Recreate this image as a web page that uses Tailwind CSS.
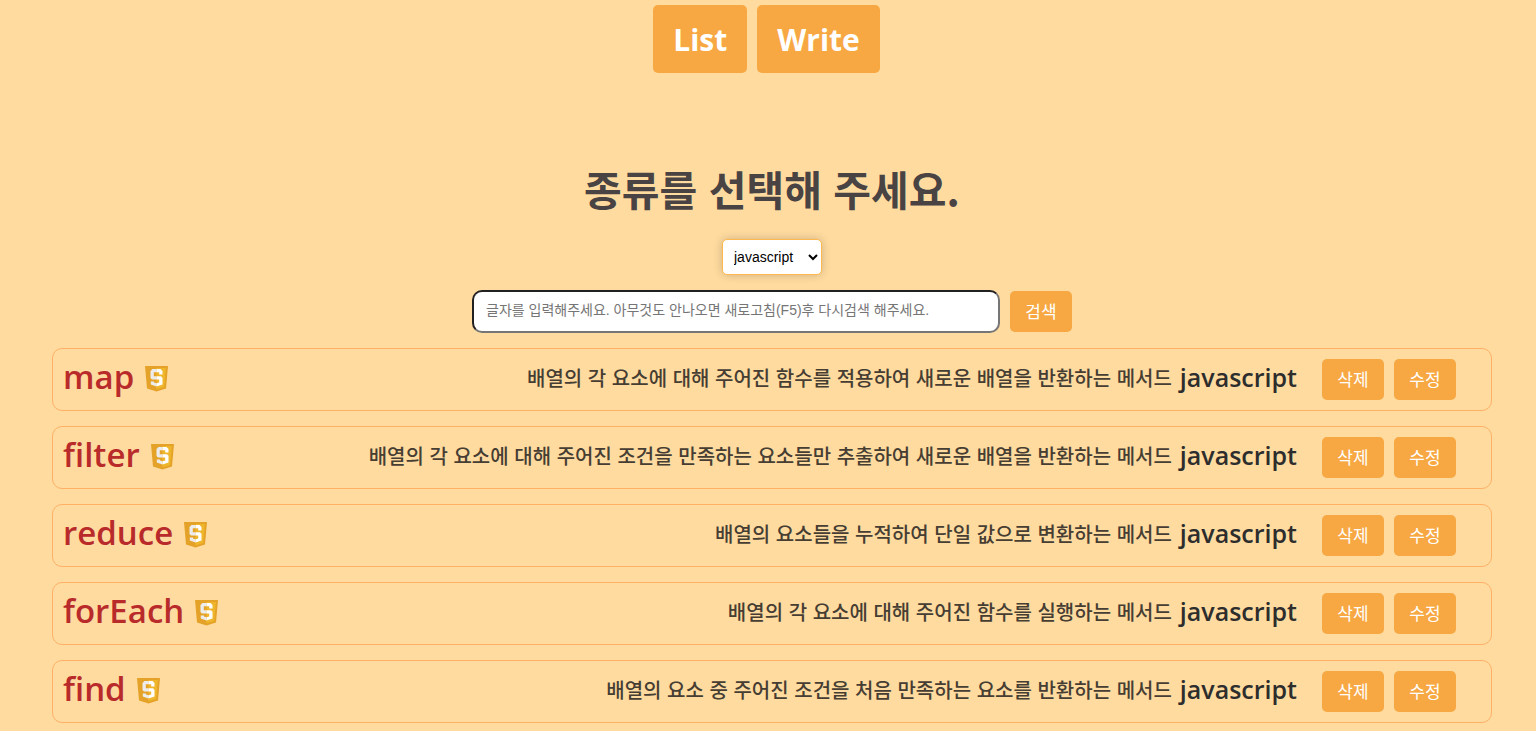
<!DOCTYPE html>
<html lang="ko">
<head>
<meta charset="utf-8">
<title>List</title>
<script src="https://cdn.jsdelivr.net/npm/@tailwindcss/browser@4"></script>
</head>
<body class="min-h-screen bg-[#ffdb9f] font-['Open_Sans','Noto_Sans_CJK_KR',sans-serif] text-[#333333]">
<svg class="hidden" aria-hidden="true">
  <symbol id="js" viewBox="0 0 24 26">
    <path d="M0 0h23l-2 22.500-9.500 3-9.500-3z" fill="#e5a228"/>
    <path d="M11.500 2h9.400l-1.700 19-7.700 2.500z" fill="#efb52b"/>
    <path d="M11.500 3H7.500L5.500 5v7l1.500 1.500h4.500v-3.200H8.800V6.300h2.700zM5.800 15.500v3l5.700 2v-3.300l-2.500-.7v-1z" fill="#ececec"/>
    <path d="M11.500 3h4l2 2v3.500h-3.300V6.300h-2.700zM11.500 10.300h4.500l1.500 1.500v6.700l-6 2v-3.300l2.700-.7v-3h-2.700z" fill="#fff"/>
  </symbol>
</svg>
<nav class="flex justify-center gap-2.5 pt-[5px] pr-[3px] text-[30px] leading-[48px] font-bold text-white">
  <a href="#list" class="rounded-[5px] bg-[#f7a843] px-5 pt-[11px] pb-[9px]">List</a>
  <a href="#write" class="rounded-[5px] bg-[#f7a843] px-5 pt-[11px] pb-[9px]">Write</a>
</nav>
<main class="mt-[87px] pr-11 pl-[52px]">
  <h1 class="text-center font-['Noto_Sans_CJK_KR',sans-serif] text-[41px] leading-[56px] font-bold text-[#494343]"><label for="kind">종류를 선택해 주세요.</label></h1>
  <div class="mt-[23px] flex justify-center">
    <select id="kind" class="h-9 w-[100px] rounded-[5px] border border-[#ffb84d] bg-white px-[7px] font-['Liberation_Sans',sans-serif] text-[14px] text-black shadow-[0_0_10px_rgba(0,0,0,0.2)]">
      <option>javascript</option>
    </select>
  </div>
  <form class="mt-[15px] flex items-center justify-center gap-2.5">
    <input type="text" aria-label="검색어" placeholder="글자를 입력해주세요. 아무것도 안나오면 새로고침(F5)후 다시검색 해주세요." class="h-[43px] w-[528px] rounded-[10px] border-2 border-t-[#212121] border-r-[#767676] border-b-[#767676] border-l-[#212121] bg-white px-3 pb-1 font-['Liberation_Sans','Noto_Sans_CJK_KR',sans-serif] text-[14px] placeholder:text-[#757575]">
    <button type="button" class="h-[41px] w-[62px] rounded-[5px] bg-[#f7a843] text-[17px] text-white">검색</button>
  </form>
  <ul id="list" class="mt-[15px] flex flex-col gap-[15px]"></ul>
</main>
<script>
  const items = [
    ['map', '배열의 각 요소에 대해 주어진 함수를 적용하여 새로운 배열을 반환하는 메서드'],
    ['filter', '배열의 각 요소에 대해 주어진 조건을 만족하는 요소들만 추출하여 새로운 배열을 반환하는 메서드'],
    ['reduce', '배열의 요소들을 누적하여 단일 값으로 변환하는 메서드'],
    ['forEach', '배열의 각 요소에 대해 주어진 함수를 실행하는 메서드'],
    ['find', '배열의 요소 중 주어진 조건을 처음 만족하는 요소를 반환하는 메서드']
  ];
  document.getElementById('list').innerHTML = items.map(([name, text]) => `
    <li class="flex h-[63px] items-center justify-between rounded-[10px] border border-[#ffb067] pr-[35px] pl-2.5">
      <h2 class="flex items-center gap-[11px] pb-1.5 text-[33px] leading-[48px] font-semibold text-[#b92b2b]">${name}<svg class="mt-1 h-[26px] w-6" aria-hidden="true"><use href="#js"/></svg></h2>
      <div class="flex items-center">
        <p class="mr-2 pb-1 font-['Noto_Sans_CJK_KR',sans-serif] text-[20px] leading-7 font-medium text-[#463d33]">${text}</p>
        <strong class="mr-[25px] pb-1.5 text-[25px] leading-9 font-semibold text-[#2d2d2d]">javascript</strong>
        <div class="flex gap-2.5 text-[17px] text-white">
          <button type="button" class="h-[41px] w-[62px] rounded-[5px] bg-[#f7a843]">삭제</button>
          <button type="button" class="h-[41px] w-[62px] rounded-[5px] bg-[#f7a843]">수정</button>
        </div>
      </div>
    </li>`).join('');
</script>
</body>
</html>
